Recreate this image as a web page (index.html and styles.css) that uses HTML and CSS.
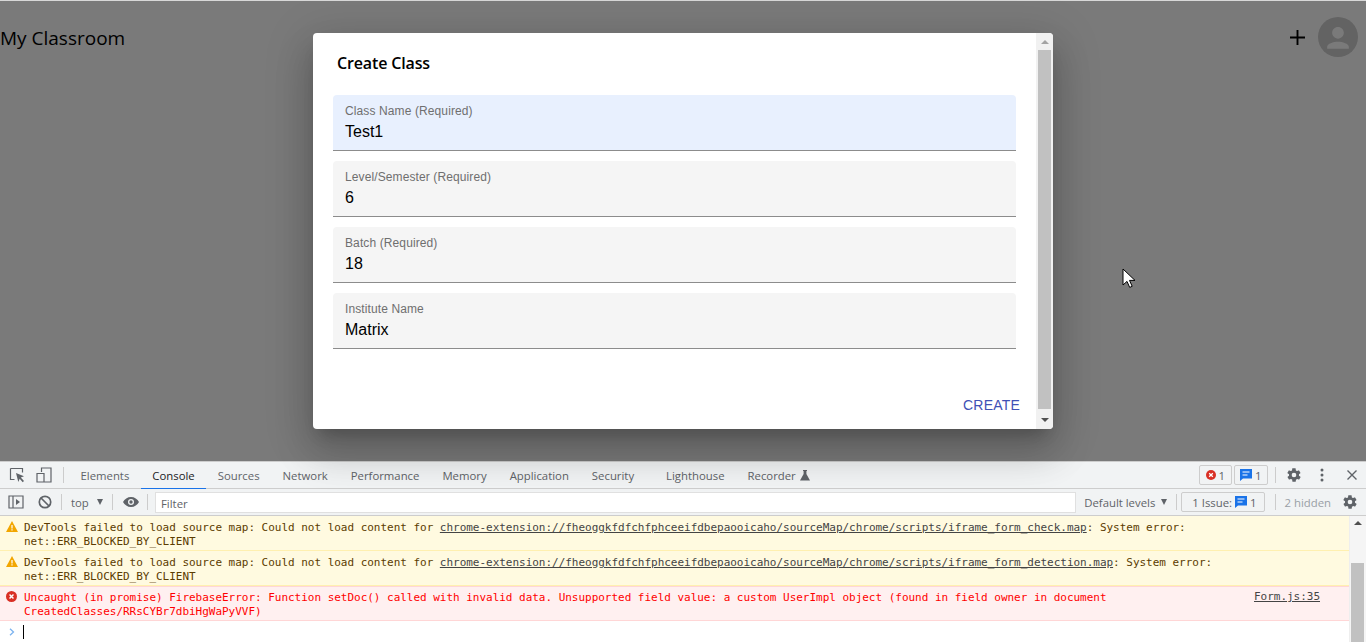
FILE: index.html
```html
<!DOCTYPE html>
<html lang="en">
<head>
<meta charset="utf-8">
<title>My Classroom</title>
<link rel="stylesheet" href="styles.css">
</head>
<body>
<div class="viewport">
  <header class="appbar">
    <div class="brand">My Classroom</div>
    <div class="actions">
      <svg class="plus" viewBox="0 0 16 16" width="15" height="15"><path d="M7 0h2v7h7v2H9v7H7V9H0V7h7z" fill="#000"/></svg>
      <div class="avatar"><svg viewBox="0 0 24 24" width="40" height="40"><path d="M12 6c1.900 0 3.500 1.600 3.500 3.500S13.900 13 12 13s-3.500-1.600-3.500-3.500S10.100 6 12 6zm0 8.800c2.700 0 6.500 1.200 6.500 3v1.200h-13v-1.200c0-1.800 3.800-3 6.500-3z"/></svg></div>
    </div>
  </header>
  <div class="overlay"></div>
  <section class="dialog">
    <div class="dialog-body">
      <h2 class="dialog-title">Create Class</h2>
      <div class="field active"><span class="field-label">Class Name (Required)</span><span class="field-value">Test1</span></div>
      <div class="field"><span class="field-label">Level/Semester (Required)</span><span class="field-value">6</span></div>
      <div class="field"><span class="field-label">Batch (Required)</span><span class="field-value">18</span></div>
      <div class="field"><span class="field-label">Institute Name</span><span class="field-value">Matrix</span></div>
      <div class="dialog-actions"><span class="create">CREATE</span></div>
    </div>
    <div class="scrollbar">
      <span class="arrow up"></span>
      <div class="track"><div class="thumb"></div></div>
      <span class="arrow down"></span>
    </div>
  </section>
  <svg class="cursor" width="14" height="21" viewBox="0 0 14 21"><path d="M1 1v16l4-3.600 2.700 6 2.500-1.100-2.700-5.900H13z" fill="#fff" stroke="#000"/></svg>
</div>

<div class="devtools">
  <div class="tabbar">
    <svg class="ic first" width="16" height="16" viewBox="0 0 16 16"><path d="M1.500 1.500h12v4M1.500 1.500v11h4" fill="none" stroke="#5f6368" stroke-width="1.200"/><path d="M7 6l8 3.200-3.200 1.300L15 14l-1.300 1.200-3-3.400L9.300 15z" fill="#5f6368"/></svg>
    <svg class="ic" width="16" height="16" viewBox="0 0 16 16"><path d="M5.500 5V1h9.500v14H8.500M1 6.500h7v8.500H1z" fill="none" stroke="#5f6368" stroke-width="1.200"/></svg>
    <span class="divider"></span>
    <nav class="tabs">
      <span class="tab">Elements</span>
      <span class="tab selected">Console</span>
      <span class="tab">Sources</span>
      <span class="tab">Network</span>
      <span class="tab">Performance</span>
      <span class="tab">Memory</span>
      <span class="tab">Application</span>
      <span class="tab">Security</span>
      <span class="tab wide">Lighthouse</span>
      <span class="tab">Recorder <svg width="10" height="11" viewBox="0 0 10 11"><path d="M3 0h4v1H6.400v3L10 10.500H0L3.600 4V1H3z" fill="#5f6368"/></svg></span>
    </nav>
    <div class="tab-right">
      <span class="count-btn"><svg width="10" height="10" viewBox="0 0 10 10"><circle cx="5" cy="5" r="5" fill="#d93025"/><path d="M3.200 3.200l3.600 3.600m0-3.600L3.200 6.800" stroke="#fff" stroke-width="1.300"/></svg>1</span>
      <span class="count-btn"><svg width="12" height="12" viewBox="0 0 12 12"><path d="M0 0h12v9.500H3L0 12z" fill="#1a73e8"/><path d="M2.500 3h7M2.500 6h5" stroke="#fff"/></svg>1</span>
      <span class="divider tight"></span>
      <svg class="gear" width="16" height="16" viewBox="0 0 24 24"><path fill="#5f6368" fill-rule="evenodd" d="M19.400 13c.1-.3.100-.7.100-1s0-.7-.1-1l2.100-1.600c.2-.1.200-.4.100-.6l-2-3.500c-.1-.2-.4-.3-.6-.2l-2.500 1c-.5-.4-1.100-.7-1.700-1l-.4-2.700c0-.2-.2-.4-.5-.4h-4c-.2 0-.5.200-.5.400l-.4 2.700c-.6.200-1.200.6-1.700 1l-2.500-1c-.2-.1-.5 0-.6.200l-2 3.500c-.1.200-.1.500.1.600L4.600 11c0 .3-.1.700-.1 1s0 .7.100 1l-2.100 1.600c-.2.100-.2.400-.1.600l2 3.500c.1.200.4.300.6.200l2.500-1c.5.400 1.100.7 1.700 1l.4 2.700c0 .2.300.4.500.4h4c.2 0 .5-.2.500-.4l.4-2.700c.6-.2 1.200-.6 1.700-1l2.500 1c.2.100.5 0 .6-.2l2-3.500c.1-.2.100-.5-.1-.6zM12 15.500a3.500 3.500 0 1 1 0-7 3.500 3.500 0 0 1 0 7z"/></svg>
      <svg class="dots" width="4" height="14" viewBox="0 0 4 14"><circle cx="2" cy="2" r="1.500" fill="#5f6368"/><circle cx="2" cy="7" r="1.500" fill="#5f6368"/><circle cx="2" cy="12" r="1.500" fill="#5f6368"/></svg>
      <svg class="close" width="10" height="10" viewBox="0 0 10 10"><path d="M.5.500l9 9m0-9l-9 9" stroke="#5f6368" stroke-width="1.400"/></svg>
    </div>
  </div>
  <div class="filterbar">
    <svg class="ic sidebar" width="16" height="14" viewBox="0 0 16 14"><path d="M1 1h14v12H1zM5 1v12" fill="none" stroke="#5f6368" stroke-width="1.200"/><path d="M8 4l4 3-4 3z" fill="#5f6368"/></svg>
    <svg class="ic block" width="14" height="14" viewBox="0 0 14 14"><circle cx="7" cy="7" r="5.700" fill="none" stroke="#5f6368" stroke-width="1.700"/><path d="M3 3l8 8" stroke="#5f6368" stroke-width="1.700"/></svg>
    <span class="divider"></span>
    <span class="context">top <i class="tri"></i></span>
    <span class="divider"></span>
    <svg class="eye" width="16" height="10" viewBox="0 0 16 10"><path fill="#5f6368" fill-rule="evenodd" d="M8 0c3.500 0 6.500 2.100 8 5-1.500 2.900-4.500 5-8 5S1.500 7.900 0 5c1.500-2.900 4.500-5 8-5zm0 2a3 3 0 1 0 0 6 3 3 0 0 0 0-6z"/><circle cx="8" cy="5" r="1.700" fill="#5f6368"/></svg>
    <span class="divider"></span>
    <div class="filter">Filter</div>
    <span class="levels">Default levels <i class="tri"></i></span>
    <span class="divider before-issues"></span>
    <span class="issues">1 Issue: <svg width="12" height="12" viewBox="0 0 12 12"><path d="M0 0h12v9.500H3L0 12z" fill="#1a73e8"/><path d="M2.500 3h7M2.500 6h5" stroke="#fff"/></svg> 1</span>
    <span class="divider after-issues"></span>
    <span class="hidden-count">2 hidden</span>
    <svg class="gear" width="16" height="16" viewBox="0 0 24 24"><path fill="#5f6368" fill-rule="evenodd" d="M19.400 13c.1-.3.100-.7.100-1s0-.7-.1-1l2.100-1.600c.2-.1.200-.4.100-.6l-2-3.500c-.1-.2-.4-.3-.6-.2l-2.500 1c-.5-.4-1.100-.7-1.700-1l-.4-2.700c0-.2-.2-.4-.5-.4h-4c-.2 0-.5.200-.5.400l-.4 2.700c-.6.200-1.200.6-1.700 1l-2.500-1c-.2-.1-.5 0-.6.200l-2 3.500c-.1.200-.1.500.1.600L4.600 11c0 .3-.1.700-.1 1s0 .7.100 1l-2.100 1.600c-.2.100-.2.400-.1.600l2 3.500c.1.200.4.300.6.200l2.500-1c.5.400 1.100.7 1.700 1l.4 2.700c0 .2.300.4.500.4h4c.2 0 .5-.2.500-.4l.4-2.700c.6-.2 1.200-.6 1.700-1l2.500 1c.2.100.5 0 .6-.2l2-3.500c.1-.2.100-.5-.1-.6zM12 15.500a3.500 3.500 0 1 1 0-7 3.500 3.500 0 0 1 0 7z"/></svg>
  </div>
  <div class="console">
    <div class="messages">
      <div class="msg warn">
        <svg class="msg-ic" width="12" height="11" viewBox="0 0 12 11"><path d="M6 0l6 11H0z" fill="#f2a600"/><path d="M6 4v3.500M6 8.300v1.200" stroke="#fff" stroke-width="1.200"/></svg>
        <div class="msg-text">
          <div class="line"><span>DevTools failed to load source map: Could not load content for </span><u>chrome-extension://fheoggkfdfchfphceeifdbepaooicaho/sourceMap/chrome/scripts/iframe_form_check.map</u><span>: System error:</span></div>
          <div class="line">net::ERR_BLOCKED_BY_CLIENT</div>
        </div>
      </div>
      <div class="msg warn">
        <svg class="msg-ic" width="12" height="11" viewBox="0 0 12 11"><path d="M6 0l6 11H0z" fill="#f2a600"/><path d="M6 4v3.500M6 8.300v1.200" stroke="#fff" stroke-width="1.200"/></svg>
        <div class="msg-text">
          <div class="line"><span>DevTools failed to load source map: Could not load content for </span><u>chrome-extension://fheoggkfdfchfphceeifdbepaooicaho/sourceMap/chrome/scripts/iframe_form_detection.map</u><span>: System error:</span></div>
          <div class="line">net::ERR_BLOCKED_BY_CLIENT</div>
        </div>
      </div>
      <div class="msg err">
        <svg class="msg-ic" width="11" height="11" viewBox="0 0 10 10"><circle cx="5" cy="5" r="5" fill="#d93025"/><path d="M3.200 3.200l3.600 3.600m0-3.600L3.200 6.800" stroke="#fff" stroke-width="1.300"/></svg>
        <div class="msg-text">
          <div class="line">Uncaught (in promise) FirebaseError: Function setDoc() called with invalid data. Unsupported field value: a custom UserImpl object (found in field owner in document</div>
          <div class="line">CreatedClasses/RRsCYBr7dbiHgWaPyVVF)</div>
        </div>
        <u class="msg-src">Form.js:35</u>
      </div>
      <div class="prompt"><svg width="6" height="8" viewBox="0 0 6 8"><path d="M1 .7L4.500 4 1 7.300" fill="none" stroke="#7cb3ef" stroke-width="1.300"/></svg><span class="caret"></span></div>
    </div>
    <div class="console-scroll"><span class="arrow up dark"></span><div class="console-thumb"></div></div>
  </div>
</div>
</body>
</html>
```
FILE: styles.css
```css
* { box-sizing: border-box; }
html, body { margin: 0; height: 642px; overflow: hidden; }
body { display: flex; flex-direction: column; background: #fff; font-family: "Open Sans", sans-serif; }

.viewport { position: relative; height: 461px; flex: none; background: #fff; border-top: 1px solid #d8d8d8; }
.appbar { display: flex; justify-content: space-between; align-items: center; height: 72px; padding: 0 8px 0 0; }
.brand { font-size: 19px; color: #000; margin-top: 1px; }
.actions { display: flex; align-items: center; gap: 13px; }
.plus { display: block; }
.avatar { width: 40px; height: 40px; border-radius: 50%; background: #cfcfcf; }
.avatar svg { display: block; }
.avatar path { fill: #fff; }
.overlay { position: absolute; inset: 0; background: rgba(0, 0, 0, .52); }

.dialog { position: absolute; left: 313px; top: 32px; width: 740px; height: 396px; background: #fff; border-radius: 4px; display: flex; box-shadow: 0 11px 15px -7px rgba(0,0,0,.2), 0 24px 38px 3px rgba(0,0,0,.14), 0 9px 46px 8px rgba(0,0,0,.12); overflow: hidden; }
.dialog-body { flex: 1; padding: 0 20px; display: flex; flex-direction: column; }
.dialog-title { margin: 0 0 20px 4px; padding-top: 18px; box-sizing: content-box; font-size: 16px; line-height: 24px; height: 24px; font-weight: 600; letter-spacing: -.15px; color: #000; }
.field { display: flex; flex-direction: column; height: 56px; margin-bottom: 10px; padding: 9px 12px 0; background: #f5f5f5; border-bottom: 1px solid #8c8c8c; border-radius: 4px 4px 0 0; font-family: "Liberation Sans", Arial, sans-serif; }
.field.active { background: #e8f0fe; }
.field-label { font-size: 12px; line-height: 15px; color: #6f6f6f; letter-spacing: .11px; }
.field-value { font-size: 16px; line-height: 24px; margin-top: 1px; color: #000; }
.dialog-actions { margin: auto -4px 0 0; display: flex; justify-content: flex-end; padding: 0 0 15px 0; }
.create { font-family: "Liberation Sans", Arial, sans-serif; font-size: 14px; line-height: 18px; letter-spacing: .2px; color: #3f51b5; }

.scrollbar { width: 17px; background: #f1f1f1; flex: none; display: flex; flex-direction: column; align-items: center; }
.arrow { display: block; width: 0; height: 0; border-left: 4px solid transparent; border-right: 4px solid transparent; flex: none; }
.arrow.up { border-bottom: 4px solid #a3a3a3; margin: 7px 0 6px; }
.arrow.down { border-top: 4px solid #505050; margin: 9px 0 7px; }
.track { flex: 1; width: 100%; min-height: 0; }
.thumb { height: 100%; margin: 0 2px; background: #c1c1c1; }

.cursor { position: absolute; left: 1122px; top: 267px; }

.devtools { flex: 1; min-height: 0; display: flex; flex-direction: column; font-size: 11.35px; color: #5f6368; }
.tabbar { height: 28px; display: flex; align-items: center; background: #f1f3f4; border-top: 1px solid #cdcdcd; border-bottom: 1px solid #cdcdcd; flex: none; }
.ic { flex: none; display: block; }
.ic.first { margin-left: 9px; margin-right: 11px; }
.divider { width: 1px; height: 16px; background: #ccc; margin: 0 6px; flex: none; }
.tabbar > .divider { margin: 0 5px 0 11px; }
.tabs { display: flex; height: 100%; }
.tab { display: flex; align-items: center; gap: 4px; padding: 0 11.500px; color: #5f6368; white-space: nowrap; }
.tab.selected { color: #202124; border-bottom: 2px solid #1a73e8; height: 28px; }
.tab.wide { margin-left: 9px; }
.tab-right { margin-left: auto; display: flex; align-items: center; height: 100%; }
.count-btn { display: flex; align-items: center; gap: 3px; height: 20px; padding: 0 5.500px; margin-right: 2px; border: 1px solid #cdcdcd; border-radius: 2px; }
.divider.tight { margin: 0 10px 0 5px; }
.dots { margin: 0 23px 0 18px; display: block; }
.close { margin-right: 9px; display: block; }

.filterbar { height: 27px; display: flex; align-items: center; background: #f1f3f4; border-bottom: 1px solid #cdcdcd; flex: none; }
.sidebar { margin-left: 8px; }
.block { margin-left: 14px; }
.filterbar > .divider { margin: 0 9px; }
.context { display: flex; align-items: center; justify-content: space-between; width: 32px; flex: none; }
.tri { display: inline-block; width: 0; height: 0; border-left: 3.500px solid transparent; border-right: 3.500px solid transparent; border-top: 6px solid #5f6368; }
.eye { flex: none; margin: 0 -1px 0 1px; }
.filter { flex: 1; height: 21px; line-height: 21px; margin-left: -2px; padding-left: 5px; background: #fff; border: 1px solid #e0e0e0; color: #5f6368; }
.levels { display: flex; align-items: center; gap: 6px; margin-left: 8px; white-space: nowrap; }
.filterbar > .before-issues { margin: 0 4px 0 9px; }
.issues { display: flex; align-items: center; gap: 3px; height: 20px; padding: 0 7px 0 10px; border: 1px solid #cdcdcd; border-radius: 2px; white-space: nowrap; }
.filterbar > .after-issues { margin: 0 9px 0 10px; }
.hidden-count { color: #9aa0a6; white-space: nowrap; margin-right: 11px; }
.filterbar > .gear { margin-right: 8px; flex: none; }

.console { flex: 1; min-height: 0; display: flex; background: #fff; }
.messages { flex: 1; min-width: 0; }
.msg { position: relative; padding: 5px 30px 0 24px; font-family: "DejaVu Sans Mono", monospace; font-size: 11px; line-height: 14px; letter-spacing: -.022px; }
.warn { height: 35px; background: #fffae0; border-bottom: 1px solid #fff0b0; color: #5c3c00; }
.err { height: 35px; background: #fff0f0; border-top: 1px solid #ffd6d6; border-bottom: 1px solid #ffd6d6; color: #f00; padding-top: 4px; }
.warn u, .msg-src { color: #444; }
.msg-ic { position: absolute; left: 6px; top: 5px; }
.err .msg-ic { top: 4px; }
.line { white-space: pre; }
.msg-src { position: absolute; right: 29px; top: 3px; }
.prompt { display: flex; align-items: center; height: 21px; padding-left: 9px; }
.caret { width: 1px; height: 14px; background: #000; margin-left: 8px; }
.console-scroll { width: 17px; flex: none; background: #f5f5f5; display: flex; flex-direction: column; align-items: center; border-left: 1px solid #eee; position: relative; }
.arrow.dark { border-bottom-color: #505050; margin: 5px 0 0; }
.console-thumb { position: absolute; left: 1px; right: 2px; top: 47px; bottom: 0; background: #c1c1c1; }
```
